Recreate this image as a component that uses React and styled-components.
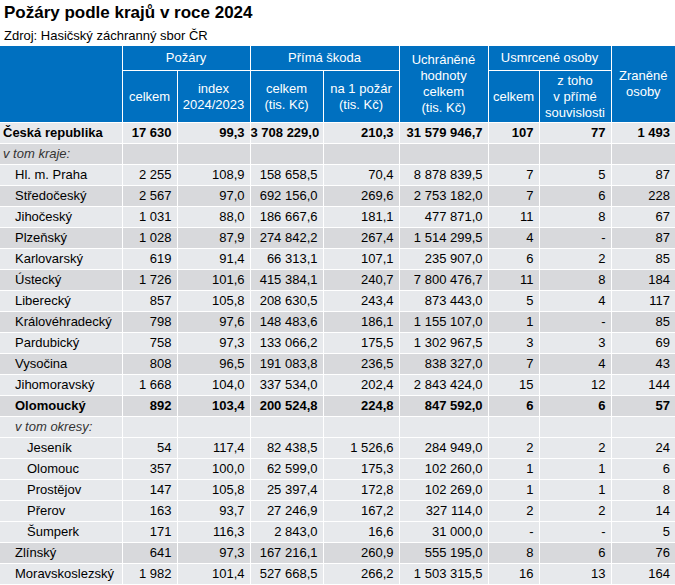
import React from "react";
import styled, { createGlobalStyle } from "styled-components";

const GlobalStyle = createGlobalStyle`
  body {
    margin: 0;
    background: #fff;
    font-family: "Liberation Sans", Arial, sans-serif;
    color: #000;
  }
`;

const Page = styled.div`
  width: 675px;
`;

const Title = styled.h1`
  margin: 0;
  padding: 3px 0 0 4px;
  font-size: 17px;
  line-height: 20px;
  font-weight: bold;
`;

const Source = styled.p`
  margin: 0;
  padding: 5px 0 0 4px;
  font-size: 13px;
  line-height: 16px;
  height: 18px;
`;

const Table = styled.table`
  width: 675px;
  table-layout: fixed;
  border-collapse: collapse;
  font-size: 13px;
`;

const Head = styled.th`
  background: #0070c0;
  color: #fff;
  font-weight: normal;
  text-align: center;
  vertical-align: middle;
  line-height: 16px;
  padding: 0 2px;
  border: 1px solid #fff;
  border-top: 0;
  height: ${(p) => p.h || 24}px;
  &:first-child { border-left: 0; }
  &:last-child { border-right: 0; }
`;

const Row = styled.tr`
  background: ${(p) => (p.dark ? "#d8d9dc" : "#e7e9ec")};
  font-weight: ${(p) => (p.bold ? "bold" : "normal")};
`;

const Name = styled.td`
  height: 20px;
  padding: 0 0 0 ${(p) => 3 + p.level * 12}px;
  border: 1px solid #fff;
  border-left: 0;
  white-space: nowrap;
  font-style: ${(p) => (p.note ? "italic" : "normal")};
  color: ${(p) => (p.note ? "#333" : "#000")};
  line-height: 16px;
`;

const Num = styled.td`
  height: 20px;
  padding: 0 5px 0 0;
  border: 1px solid #fff;
  text-align: right;
  white-space: nowrap;
  line-height: 16px;
  &:last-child { border-right: 0; }
`;

const cols = [122, 55, 73, 73, 76, 89, 51, 72, 64];

const rows = [
  { name: "Česká republika", level: 0, bold: true, v: ["17 630", "99,3", "3 708 229,0", "210,3", "31 579 946,7", "107", "77", "1 493"] },
  { name: "v tom kraje:", level: 0, note: true, dark: true },
  { name: "Hl. m. Praha", level: 1, v: ["2 255", "108,9", "158 658,5", "70,4", "8 878 839,5", "7", "5", "87"] },
  { name: "Středočeský", level: 1, dark: true, v: ["2 567", "97,0", "692 156,0", "269,6", "2 753 182,0", "7", "6", "228"] },
  { name: "Jihočeský", level: 1, v: ["1 031", "88,0", "186 667,6", "181,1", "477 871,0", "11", "8", "67"] },
  { name: "Plzeňský", level: 1, dark: true, v: ["1 028", "87,9", "274 842,2", "267,4", "1 514 299,5", "4", "-", "87"] },
  { name: "Karlovarský", level: 1, v: ["619", "91,4", "66 313,1", "107,1", "235 907,0", "6", "2", "85"] },
  { name: "Ústecký", level: 1, dark: true, v: ["1 726", "101,6", "415 384,1", "240,7", "7 800 476,7", "11", "8", "184"] },
  { name: "Liberecký", level: 1, v: ["857", "105,8", "208 630,5", "243,4", "873 443,0", "5", "4", "117"] },
  { name: "Královéhradecký", level: 1, dark: true, v: ["798", "97,6", "148 483,6", "186,1", "1 155 107,0", "1", "-", "85"] },
  { name: "Pardubický", level: 1, v: ["758", "97,3", "133 066,2", "175,5", "1 302 967,5", "3", "3", "69"] },
  { name: "Vysočina", level: 1, dark: true, v: ["808", "96,5", "191 083,8", "236,5", "838 327,0", "7", "4", "43"] },
  { name: "Jihomoravský", level: 1, v: ["1 668", "104,0", "337 534,0", "202,4", "2 843 424,0", "15", "12", "144"] },
  { name: "Olomoucký", level: 1, dark: true, bold: true, v: ["892", "103,4", "200 524,8", "224,8", "847 592,0", "6", "6", "57"] },
  { name: "v tom okresy:", level: 1, note: true },
  { name: "Jeseník", level: 2, v: ["54", "117,4", "82 438,5", "1 526,6", "284 949,0", "2", "2", "24"] },
  { name: "Olomouc", level: 2, v: ["357", "100,0", "62 599,0", "175,3", "102 260,0", "1", "1", "6"] },
  { name: "Prostějov", level: 2, v: ["147", "105,8", "25 397,4", "172,8", "102 269,0", "1", "1", "8"] },
  { name: "Přerov", level: 2, v: ["163", "93,7", "27 246,9", "167,2", "327 114,0", "2", "2", "14"] },
  { name: "Šumperk", level: 2, v: ["171", "116,3", "2 843,0", "16,6", "31 000,0", "-", "-", "5"] },
  { name: "Zlínský", level: 1, dark: true, v: ["641", "97,3", "167 216,1", "260,9", "555 195,0", "8", "6", "76"] },
  { name: "Moravskoslezský", level: 1, v: ["1 982", "101,4", "527 668,5", "266,2", "1 503 315,5", "16", "13", "164"] },
];

const nb = (s) => s.replace(/ /g, "\u00a0");

export default function App() {
  return (
    <Page>
      <GlobalStyle />
      <Title>Požáry podle krajů v roce 2024</Title>
      <Source>Zdroj: Hasičský záchranný sbor ČR</Source>
      <Table>
        <colgroup>
          {cols.map((w, i) => (
            <col key={i} style={{ width: w }} />
          ))}
        </colgroup>
        <thead>
          <tr>
            <Head rowSpan={2} />
            <Head colSpan={2}>Požáry</Head>
            <Head colSpan={2}>Přímá škoda</Head>
            <Head rowSpan={2}>
              Uchráněné<br />hodnoty<br />celkem<br />(tis. Kč)
            </Head>
            <Head colSpan={2}>Usmrcené osoby</Head>
            <Head rowSpan={2}>
              Zraněné<br />osoby
            </Head>
          </tr>
          <tr>
            <Head h={51}>celkem</Head>
            <Head h={51}>
              index<br />2024/2023
            </Head>
            <Head h={51}>
              celkem<br />(tis. Kč)
            </Head>
            <Head h={51}>
              na 1 požár<br />(tis. Kč)
            </Head>
            <Head h={51}>celkem</Head>
            <Head h={51}>
              z toho<br />v přímé<br />souvislosti
            </Head>
          </tr>
        </thead>
        <tbody>
          {rows.map((r) => (
            <Row key={r.name} dark={r.dark} bold={r.bold}>
              <Name level={r.level} note={r.note}>
                {r.name}
              </Name>
              {(r.v || Array(8).fill("")).map((x, i) => (
                <Num key={i}>{nb(x)}</Num>
              ))}
            </Row>
          ))}
        </tbody>
      </Table>
    </Page>
  );
}
